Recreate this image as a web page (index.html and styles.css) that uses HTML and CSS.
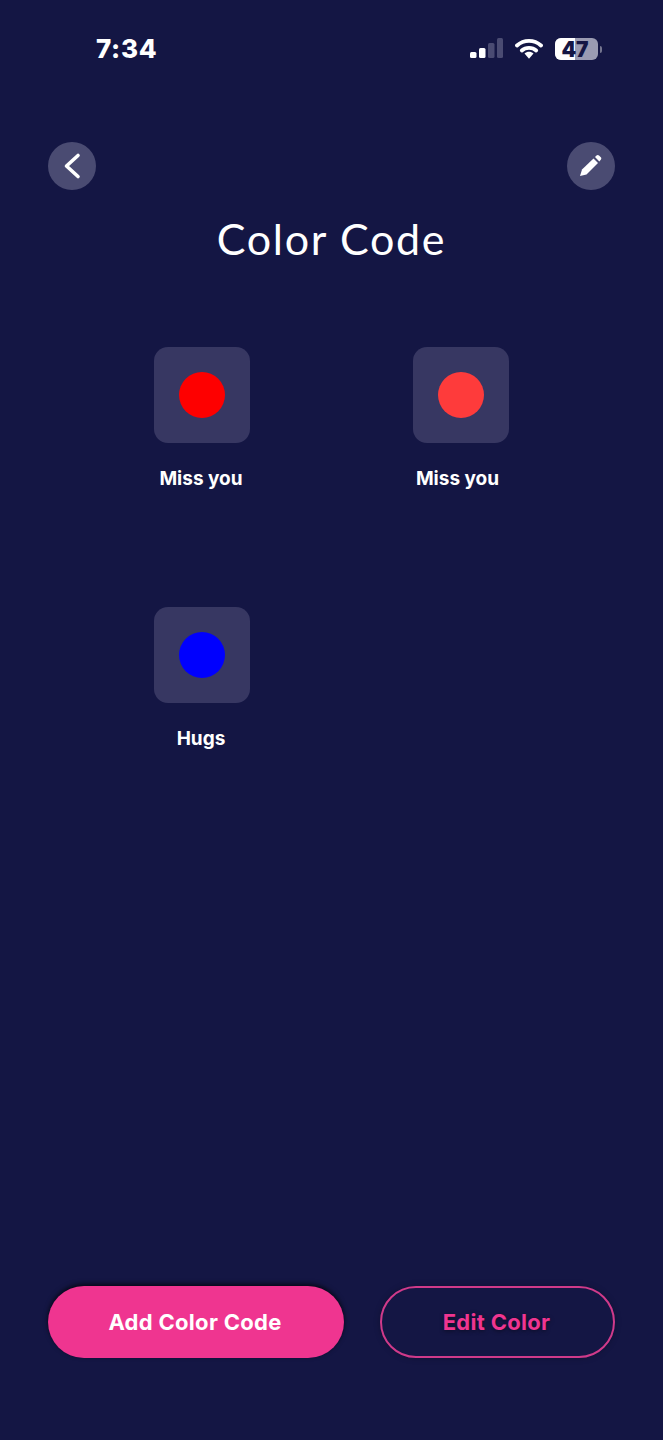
FILE: index.html
```html
<!DOCTYPE html>
<html lang="en">
<head>
    <meta charset="UTF-8">
    <meta name="viewport" content="width=device-width, initial-scale=1.0">
    <title>Color Code</title>
    <link rel="stylesheet" href="styles.css">
</head>
<body>

<div class="screen">
    <div class="status-bar">
        <span class="time">7:34</span>
        <div class="status-icons">
            <svg class="signal" width="33" height="20" viewBox="0 0 33 20">
                <rect x="0" y="14" width="6.500" height="6" rx="1.500" fill="#fff"/>
                <rect x="9" y="10" width="6.500" height="10" rx="1.500" fill="#fff"/>
                <rect x="18" y="5" width="6.500" height="15" rx="1.500" fill="#4a4b72"/>
                <rect x="27" y="0" width="6" height="20" rx="1.500" fill="#4a4b72"/>
            </svg>
            <svg class="wifi" width="28" height="21" viewBox="0 0 28 21">
                <path d="M2 7.500C8.800 1.200 19.200 1.200 26 7.500" fill="none" stroke="#fff" stroke-width="3.800" stroke-linecap="round"/>
                <path d="M6.800 12.500C10.700 9 17.300 9 21.200 12.500" fill="none" stroke="#fff" stroke-width="3.800" stroke-linecap="round"/>
                <path d="M9.500 15.500C12 13.300 16 13.300 18.500 15.500L14 20.800Z" fill="#fff"/>
            </svg>
            <div class="battery">
                <div class="battery-body">
                    <div class="battery-fill"></div>
                    <span class="battery-text">47</span>
                </div>
                <div class="battery-tip"></div>
            </div>
        </div>
    </div>

    <div class="top-actions">
        <button class="round-btn" aria-label="Back">
            <svg width="48" height="48" viewBox="0 0 48 48">
                <path d="M30 13.500L18.500 24L30 34.500" fill="none" stroke="#fff" stroke-width="3.600" stroke-linecap="round" stroke-linejoin="round"/>
            </svg>
        </button>
        <button class="round-btn" aria-label="Edit">
            <svg width="48" height="48" viewBox="0 0 48 48">
                <path d="M13 34L15 27.500L26.500 16.500L31 21L19.500 32.500Z" fill="#fff"/>
                <path d="M28 15L29.500 13.500C30.200 12.800 31.200 12.800 32 13.500L33.800 15.300C34.500 16 34.500 17 33.800 17.700L32.300 19.500Z" fill="#fff"/>
            </svg>
        </button>
    </div>

    <h1 class="title">Color Code</h1>

    <div class="color-grid">
        <div class="color-item">
            <div class="color-tile"><span class="dot dot-red"></span></div>
            <div class="color-name">Miss you</div>
        </div>
        <div class="color-item">
            <div class="color-tile"><span class="dot dot-coral"></span></div>
            <div class="color-name color-name-left">Miss you</div>
        </div>
        <div class="color-item">
            <div class="color-tile"><span class="dot dot-blue"></span></div>
            <div class="color-name">Hugs</div>
        </div>
    </div>

    <div class="bottom-actions">
        <button class="btn btn-add">Add Color Code</button>
        <button class="btn btn-edit">Edit Color</button>
    </div>
</div>

</body>
</html>
```

FILE: styles.css
```css
* {
    box-sizing: border-box;
}

body {
    margin: 0;
    padding: 0;
    background-color: #141644;
    font-family: "Inter", "Liberation Sans", sans-serif;
    color: #fff;
}

.screen {
    display: flex;
    flex-direction: column;
    height: 1440px;
    overflow: hidden;
    padding: 0 48px 82px 48px;
}

.status-bar {
    display: flex;
    justify-content: space-between;
    align-items: center;
    height: 98px;
    padding: 0 13px 0 48px;
}

.time {
    margin-top: -2px;
    font-family: "Inter", "Liberation Sans", sans-serif;
    font-size: 26px;
    font-weight: 800;
    letter-spacing: 0.7px;
}

.status-icons {
    display: flex;
    align-items: center;
    gap: 12px;
}

.signal {
    margin-top: -2px;
}

.wifi {
    margin-top: -1px;
}

.battery {
    display: flex;
    align-items: center;
    gap: 2px;
}

.battery-body {
    position: relative;
    display: flex;
    align-items: center;
    justify-content: center;
    width: 43px;
    height: 22px;
    padding-right: 3px;
    border-radius: 6px;
    overflow: hidden;
    background-color: #9a9bb2;
}

.battery-fill {
    position: absolute;
    left: 0;
    top: 0;
    bottom: 0;
    width: 20px;
    background-color: #fff;
}

.battery-text {
    position: relative;
    font-size: 21px;
    font-weight: 900;
    color: #141644;
}

.battery-tip {
    width: 2px;
    height: 7px;
    border-radius: 0 2px 2px 0;
    background-color: #74758f;
}

.top-actions {
    display: flex;
    justify-content: space-between;
    margin-top: 44px;
}

.round-btn {
    width: 48px;
    height: 48px;
    padding: 0;
    border: none;
    border-radius: 50%;
    background-color: #4a4b72;
    cursor: pointer;
}

.round-btn svg {
    display: block;
}

.title {
    margin: 21px 0 0;
    font-family: "Lato", "Liberation Sans", sans-serif;
    font-size: 43px;
    font-weight: 400;
    line-height: 56px;
    letter-spacing: 1.700px;
    text-align: center;
}

.color-grid {
    display: grid;
    grid-template-columns: 120px 120px;
    column-gap: 139px;
    row-gap: 116px;
    align-content: start;
    margin: 80px 0 0 94px;
}

.color-item {
    display: flex;
    flex-direction: column;
    align-items: center;
}

.color-tile {
    display: flex;
    align-items: center;
    justify-content: center;
    width: 96px;
    height: 96px;
    border-radius: 14px;
    background-color: #373762;
}

.dot {
    width: 46px;
    height: 46px;
    border-radius: 50%;
}

.dot-red {
    background-color: #fe0000;
}

.dot-coral {
    background-color: #fe3b3b;
}

.dot-blue {
    background-color: #0000fe;
}

.color-name {
    margin-top: 24px;
    padding-right: 2px;
    font-size: 19px;
    font-weight: 700;
    line-height: 24px;
    text-align: center;
}

.color-name-left {
    padding-right: 7px;
}

.bottom-actions {
    display: flex;
    justify-content: space-between;
    margin-top: auto;
}

.btn {
    height: 72px;
    border-radius: 36px;
    font-family: "Inter", "Liberation Sans", sans-serif;
    font-size: 22px;
    font-weight: 700;
    letter-spacing: 0.3px;
    cursor: pointer;
}

.btn-add {
    width: 296px;
    padding-right: 8px;
    border: none;
    background-color: #ef3590;
    color: #fff;
    box-shadow: 0 -2px 5px rgba(0, 0, 0, 0.7);
}

.btn-edit {
    width: 235px;
    padding-right: 8px;
    border: 2px solid #d03a8a;
    background-color: transparent;
    color: #ef3590;
    text-shadow: 0 1px 4px rgba(0, 0, 0, 0.5);
    box-shadow: 0 0 6px rgba(0, 0, 0, 0.25);
}
```
